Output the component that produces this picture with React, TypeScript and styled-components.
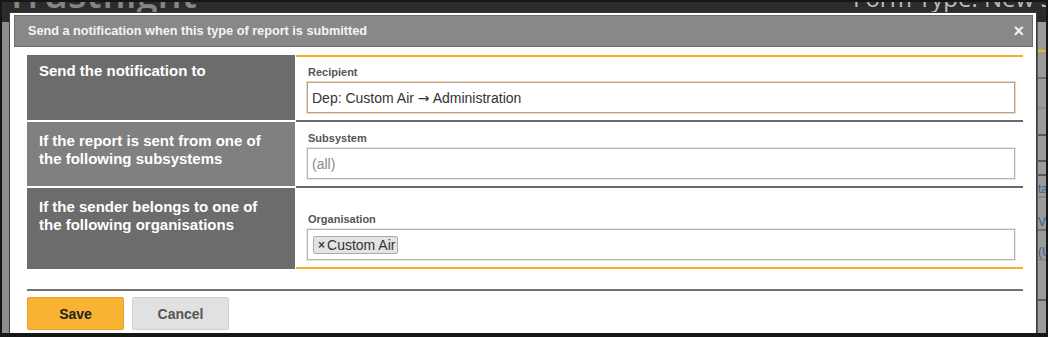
import React from "react";
import styled, { createGlobalStyle } from "styled-components";

const GlobalStyle = createGlobalStyle`
  html, body { margin: 0; padding: 0; background: #111; }
  body { font-family: "Liberation Sans", Arial, sans-serif; }
  *, *::before, *::after { box-sizing: border-box; }
`;

const ORANGE = "#f9ad25";

const Frame = styled.div`
  position: relative;
  width: 1048px;
  height: 337px;
  overflow: hidden;
  border: 2px solid #161616;
  border-bottom-width: 4px;
  background: #2b2b2b;
  display: flex;
  flex-direction: column;
`;

const Header = styled.header`
  height: 20px;
  flex-shrink: 0;
  background: #2b2b2b;
  display: grid;
  grid-template-columns: 851px 1fr;
  grid-template-rows: 20px;
  align-items: end;
  overflow: hidden;
`;

const Brand = styled.div`
  font-family: "Open Sans", sans-serif;
  font-size: 38px;
  font-weight: 600;
  line-height: 58px;
  color: #858585;
  padding-left: 4px;
  white-space: nowrap;
`;

const FormType = styled.div`
  font-family: "Open Sans", sans-serif;
  font-size: 24px;
  line-height: 48px;
  color: #bdbdbd;
  white-space: nowrap;
  overflow: hidden;
`;

const Backdrop = styled.main`
  flex: 1;
  display: flex;
`;

const LeftRail = styled.div`
  width: 8px;
  background: #8e8e8e;
  border-right: 1px solid #3a3a3a;
`;

const Stage = styled.div`
  flex: 1;
  background: #fff;
`;

const RightRail = styled.div`
  width: 10px;
  background: #9b9b9b;
  border-left: 2px solid #5a5a5a;
  display: flex;
  flex-direction: column;
`;

const RailRow = styled.div<{ $h: number; $line: string }>`
  height: ${(p) => p.$h}px;
  flex-shrink: 0;
  border-bottom: 2px solid ${(p) => p.$line};
  font-size: 12px;
  line-height: 14px;
  color: #3a5f9a;
  overflow: hidden;
  white-space: nowrap;
  display: flex;
  align-items: flex-end;
`;

const Dialog = styled.section`
  position: absolute;
  left: 8px;
  top: 11px;
  width: 1026px;
  height: 340px;
  background: #fff;
  padding: 2px 3px 0 4px;
  box-shadow: 0 0 0 1px #3a3a3a;
`;

const TitleBar = styled.div`
  height: 32px;
  background: #888888;
  border: 1px solid #6e6e6e;
  display: flex;
  align-items: center;
  justify-content: space-between;
  padding: 0 8px 1px 13px;
`;

const Title = styled.h2`
  margin: 0;
  font-size: 12.7px;
  font-weight: bold;
  color: #f4f4f4;
`;

const Close = styled.span`
  font-size: 18px;
  font-weight: bold;
  color: #f2f2f2;
  line-height: 1;
`;

const Body = styled.div`
  padding: 8px 10px 0 13px;
`;

const Table = styled.div`
  display: flex;
  flex-direction: column;
`;

const Row = styled.div<{ $h: number }>`
  display: flex;
  gap: 1px;
  height: ${(p) => p.$h}px;
`;

const LabelCell = styled.div<{ $tone: string; $first?: boolean; $last?: boolean; $padTop: number }>`
  width: 268px;
  flex-shrink: 0;
  background: ${(p) => p.$tone};
  border-top: 2px solid ${(p) => (p.$first ? p.$tone : "#ffffff")};
  border-bottom: ${(p) => (p.$last ? `2px solid ${p.$tone}` : "none")};
  padding: ${(p) => p.$padTop}px 12px 0 12px;
  font-size: 15px;
  line-height: 18px;
  font-weight: bold;
  color: #ffffff;
`;

const FieldCell = styled.div<{ $first?: boolean; $last?: boolean }>`
  flex: 1;
  display: flex;
  flex-direction: column;
  justify-content: flex-end;
  border-top: 2px solid ${(p) => (p.$first ? ORANGE : "#6a6a6a")};
  border-bottom: ${(p) => (p.$last ? `2px solid ${ORANGE}` : "none")};
  padding: 0 8px 7px 11px;
`;

const FieldLabel = styled.label`
  display: block;
  font-size: 11px;
  line-height: 13px;
  font-weight: bold;
  color: #555555;
  margin: 0 0 3px 1px;
`;

const InputBox = styled.div<{ $focus?: boolean; $h: number }>`
  height: ${(p) => p.$h}px;
  border: 1px solid ${(p) => (p.$focus ? "#a8a8a8" : "#b4b4b4")};
  box-shadow: 0 0 0 1px ${(p) => (p.$focus ? "#f9d4ac" : "#e8e8e8")};
  background: #fff;
  display: flex;
  align-items: center;
  padding: 0 4px;
  font-size: 14px;
  color: #333333;
  white-space: pre;
`;

const Arrow = styled.span`
  font-family: "DejaVu Sans", sans-serif;
  font-size: 14px;
`;

const Placeholder = styled.span`
  color: #8a8a8a;
`;

const Tag = styled.span`
  display: inline-flex;
  align-items: center;
  height: 18px;
  margin-left: 1px;
  padding: 0 2px 0 4px;
  background: #e4e4e4;
  border: 1px solid #aaaaaa;
  border-radius: 2px;
  font-size: 14px;
  color: #333;
`;

const TagRemove = styled.span`
  font-size: 12px;
  font-weight: bold;
  color: #444;
  margin-right: 2px;
`;

const Footer = styled.div`
  margin-top: 20px;
  border-top: 2px solid #737373;
  padding-top: 6px;
  display: flex;
  gap: 8px;
`;

const Button = styled.button<{ $primary?: boolean }>`
  width: 97px;
  height: 33px;
  border-radius: 2px;
  border: 1px solid ${(p) => (p.$primary ? "#e7a22c" : "#cfcfcf")};
  background: ${(p) => (p.$primary ? "#f9b232" : "#e1e1e1")};
  color: ${(p) => (p.$primary ? "#222222" : "#555555")};
  font-family: "Liberation Sans", Arial, sans-serif;
  font-size: 14px;
  font-weight: bold;
  padding: 0;
`;

const rail: Array<[number, string, string]> = [
  [30, ORANGE, ""],
  [27, "#6e6e6e", ""],
  [30, "#8a8a8a", ""],
  [27, "#5a5a5a", ""],
  [26, "#5a5a5a", ""],
  [14, "#5a5a5a", ""],
  [22, "#8a8a8a", "ta"],
  [33, "#6e6e6e", "V"],
  [30, "#8a8a8a", "(U"],
  [40, "#5a5a5a", ""],
];

export default function App() {
  return (
    <>
      <GlobalStyle />
      <Frame>
        <Header>
          <Brand>Trustflight</Brand>
          <FormType>Form Type: New Status</FormType>
        </Header>
        <Backdrop>
          <LeftRail />
          <Stage />
          <RightRail>
            {rail.map(([h, c, t], i) => (
              <RailRow key={i} $h={h} $line={c}>
                {t}
              </RailRow>
            ))}
          </RightRail>
        </Backdrop>

        <Dialog>
          <TitleBar>
            <Title>Send a notification when this type of report is submitted</Title>
            <Close>×</Close>
          </TitleBar>
          <Body>
            <Table>
              <Row $h={65}>
                <LabelCell $tone="#6c6c6c" $first $padTop={5}>
                  Send the notification to
                </LabelCell>
                <FieldCell $first>
                  <FieldLabel>Recipient</FieldLabel>
                  <InputBox $focus $h={31}>
                    Dep: Custom Air <Arrow>→</Arrow> Administration
                  </InputBox>
                </FieldCell>
              </Row>
              <Row $h={66}>
                <LabelCell $tone="#808080" $padTop={10}>
                  If the report is sent from one of the following subsystems
                </LabelCell>
                <FieldCell>
                  <FieldLabel>Subsystem</FieldLabel>
                  <InputBox $h={31}>
                    <Placeholder>(all)</Placeholder>
                  </InputBox>
                </FieldCell>
              </Row>
              <Row $h={83}>
                <LabelCell $tone="#6c6c6c" $last $padTop={10}>
                  If the sender belongs to one of the following organisations
                </LabelCell>
                <FieldCell $last>
                  <FieldLabel>Organisation</FieldLabel>
                  <InputBox $h={31}>
                    <Tag>
                      <TagRemove>×</TagRemove>Custom Air
                    </Tag>
                  </InputBox>
                </FieldCell>
              </Row>
            </Table>
            <Footer>
              <Button $primary>Save</Button>
              <Button>Cancel</Button>
            </Footer>
          </Body>
        </Dialog>
      </Frame>
    </>
  );
}
